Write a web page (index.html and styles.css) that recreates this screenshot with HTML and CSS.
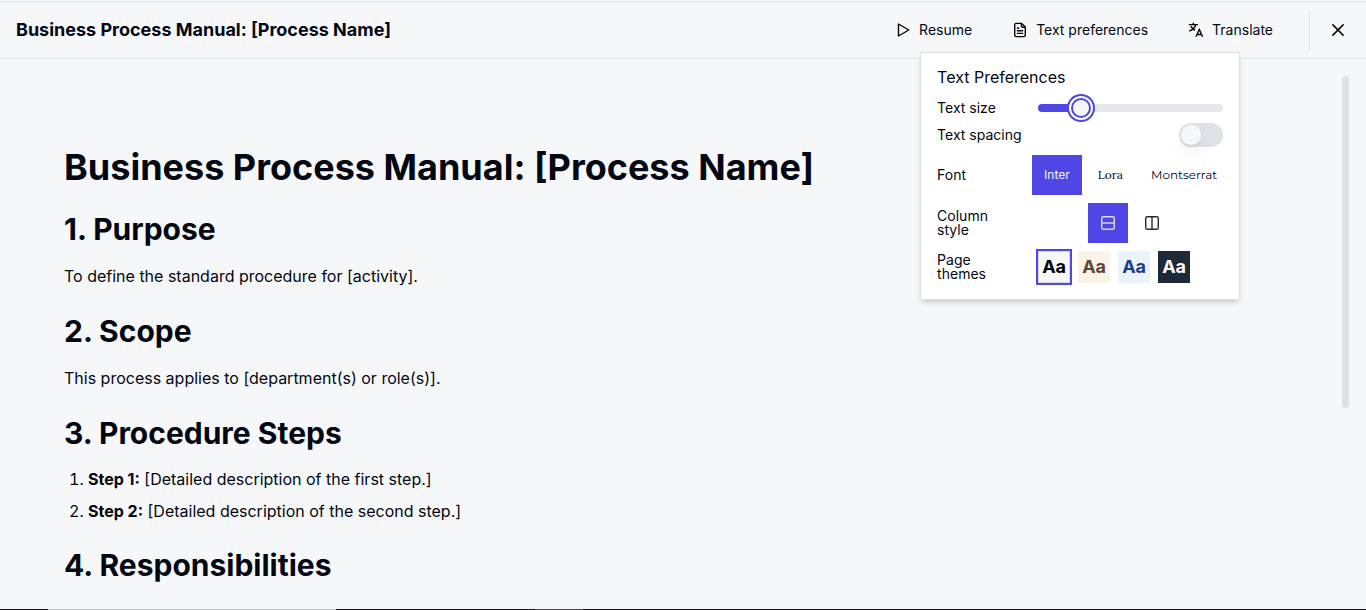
FILE: index.html
```html
<!DOCTYPE html>
<html lang="en">
<head>
<meta charset="utf-8">
<meta name="viewport" content="width=device-width, initial-scale=1">
<title>Business Process Manual</title>
<link rel="stylesheet" href="styles.css">
</head>
<body>
<div class="reader">
  <header class="topbar">
    <div class="topbar-title">Business Process Manual: [Process Name]</div>
    <div class="actions">
      <button class="action" type="button">
        <svg class="icon" viewBox="0 0 16 16" aria-hidden="true"><path d="M3.5 2v12L13.8 8z" fill="none" stroke="currentColor" stroke-width="1.4" stroke-linejoin="round"/></svg>
        Resume
      </button>
      <div class="menu-anchor">
        <button class="action" type="button" aria-expanded="true">
          <svg class="icon" viewBox="0 0 16 16" aria-hidden="true"><g fill="none" stroke="currentColor" stroke-width="1.4" stroke-linejoin="round" stroke-linecap="round"><path d="M9.6 1.4H4.2c-.9 0-1.5.6-1.5 1.5v10.2c0 .9.6 1.5 1.5 1.5h7.6c.9 0 1.5-.6 1.5-1.5V5z"/><path d="M9.4 1.6v2.5c0 .7.4 1.1 1.1 1.1h2.6M5.4 6h1.4M5.4 8.7h5.2M5.4 11.4h5.2"/></g></svg>
          Text preferences
        </button>
        <section class="popover" aria-label="Text Preferences">
          <h2 class="popover-title">Text Preferences</h2>
          <div class="row row-size">
            <label class="row-label" for="size">Text size</label>
            <input class="slider" id="size" type="range" min="0" max="5" value="1">
          </div>
          <div class="row row-spacing">
            <label class="row-label" for="spacing">Text spacing</label>
            <input class="switch" id="spacing" type="checkbox" role="switch">
          </div>
          <div class="row">
            <span class="row-label" id="font-label">Font</span>
            <div class="choices" role="group" aria-labelledby="font-label">
              <button class="choice choice-active" type="button">Inter</button>
              <button class="choice choice-lora" type="button">Lora</button>
              <button class="choice choice-montserrat" type="button">Montserrat</button>
            </div>
          </div>
          <div class="row">
            <span class="row-label row-label-narrow" id="column-label">Column style</span>
            <div class="choices choices-center" role="group" aria-labelledby="column-label">
              <button class="choice choice-square choice-active" type="button" aria-label="Single column">
                <svg class="icon" viewBox="0 0 16 16" aria-hidden="true"><g fill="none" stroke="currentColor" stroke-width="1.4"><rect x="1.7" y="1.7" width="12.6" height="12.6" rx="1.6"/><path d="M2 8h12"/></g></svg>
              </button>
              <button class="choice choice-square" type="button" aria-label="Two columns">
                <svg class="icon" viewBox="0 0 16 16" aria-hidden="true"><g fill="none" stroke="currentColor" stroke-width="1.4"><rect x="1.7" y="1.7" width="12.6" height="12.6" rx="1.6"/><path d="M8 2v12"/></g></svg>
              </button>
            </div>
          </div>
          <div class="row">
            <span class="row-label row-label-narrow" id="theme-label">Page themes</span>
            <div class="themes" role="group" aria-labelledby="theme-label">
              <button class="theme theme-light theme-active" type="button">Aa</button>
              <button class="theme theme-sepia" type="button">Aa</button>
              <button class="theme theme-blue" type="button">Aa</button>
              <button class="theme theme-dark" type="button">Aa</button>
            </div>
          </div>
        </section>
      </div>
      <button class="action" type="button">
        <svg class="icon" viewBox="0 0 16 16" aria-hidden="true"><g fill="none" stroke="currentColor" stroke-width="1.4"><path d="M.8 2.6h9M5.3.8v1.8M2.8 4.2c1 1.8 2.4 3.2 4.2 4.2M7.8 2.8C7 5.6 4.4 7.8 1.4 9"/><path d="M8 14.8l3.3-7.4 3.3 7.4M9 12.5h4.6"/></g></svg>
        Translate
      </button>
      <div class="divider"></div>
      <button class="close" type="button" aria-label="Close">
        <svg class="icon" viewBox="0 0 16 16" aria-hidden="true"><path d="M2.4 2.4l11.2 11.2M13.6 2.4L2.4 13.6" fill="none" stroke="currentColor" stroke-width="1.5"/></svg>
      </button>
    </div>
  </header>
  <main class="page">
    <article class="doc">
      <h1>Business Process Manual: [Process Name]</h1>
      <h2>1. Purpose</h2>
      <p>To define the standard procedure for [activity].</p>
      <h2>2. Scope</h2>
      <p>This process applies to [department(s) or role(s)].</p>
      <h2>3. Procedure Steps</h2>
      <ol>
        <li><strong>Step 1:</strong> [Detailed description of the first step.]</li>
        <li><strong>Step 2:</strong> [Detailed description of the second step.]</li>
      </ol>
      <h2>4. Responsibilities</h2>
    </article>
    <div class="scroll-track"><div class="scroll-thumb"></div></div>
  </main>
  <div class="bottom-edge"></div>
</div>
</body>
</html>
```
FILE: styles.css
```css
:root {
  --ink: #030712;
  --paper: #f6f7f9;
  --line: #dee1e6;
  --accent: #4f46e5;
}
* { box-sizing: border-box; }
body {
  margin: 0;
  background: var(--paper);
  color: var(--ink);
  font: 16px/26px Inter, "Liberation Sans", sans-serif;
}
button {
  margin: 0;
  border: 0;
  padding: 0;
  background: none;
  color: inherit;
  font: inherit;
  cursor: pointer;
}
.reader {
  display: flex;
  flex-direction: column;
  height: 100vh;
  overflow: hidden;
  padding-top: 1px;
}
.topbar {
  display: flex;
  align-items: center;
  justify-content: space-between;
  flex: none;
  padding: 8px 20px 8px 16px;
  border: solid #dfe3e2;
  border-width: 1px 0;
}
.topbar-title { font-size: 18px; font-weight: 700; }
.actions { display: flex; align-items: center; gap: 8px; }
.action {
  display: flex;
  align-items: center;
  gap: 8px;
  height: 40px;
  padding: 0 16px;
  font-size: 14px;
}
.icon { display: block; width: 16px; height: 16px; flex: none; }
.divider { width: 1px; height: 40px; margin: 0 12px; background: var(--line); }
.menu-anchor { position: relative; }
.popover {
  position: absolute;
  z-index: 2;
  top: 42px;
  left: 50%;
  width: 320px;
  margin-left: -160px;
  padding: 12px 16px 16px;
  border: 1px solid var(--line);
  background: #fff;
  box-shadow: 0 4px 6px -1px rgba(0, 0, 0, .12), 0 2px 4px -2px rgba(0, 0, 0, .12);
}
.popover-title { margin: 0; font-size: 16px; line-height: 24px; font-weight: 400; }
.row {
  display: grid;
  grid-template-columns: 95px 1fr;
  align-items: center;
  margin-top: 8px;
}
.row-label { font-size: 14px; line-height: 14px; }
.row-label-narrow { max-width: 60px; }
.row-size { height: 22px; }
.row-spacing { margin-top: 4px; }
.slider {
  appearance: none;
  height: 8px;
  margin: 0 0 0 6px;
  border-radius: 4px;
  background: linear-gradient(to right, var(--accent) 23%, #e5e7eb 23%);
}
.slider::-webkit-slider-thumb {
  appearance: none;
  width: 20px;
  height: 20px;
  border: 2px solid var(--accent);
  border-radius: 50%;
  background: var(--paper);
  box-shadow: 0 0 0 2px #fff, 0 0 0 4px var(--accent);
}
.switch {
  appearance: none;
  justify-self: end;
  width: 44px;
  height: 24px;
  margin: 0;
  padding: 2px;
  border-radius: 12px;
  background: var(--line);
}
.switch::before {
  content: "";
  display: block;
  width: 20px;
  height: 20px;
  border-radius: 50%;
  background: var(--paper);
  box-shadow: 0 10px 15px -3px rgba(0, 0, 0, .1), 0 4px 6px -4px rgba(0, 0, 0, .1);
}
.switch:checked { background: var(--accent); }
.switch:checked::before { margin-left: auto; }
.choices { display: flex; gap: 4px; margin-right: -4px; }
.choices-center { justify-content: center; }
.choice { height: 40px; padding: 0 12px; font-size: 12px; }
.choice-active { background: var(--accent); color: var(--paper); }
.choice-square { display: grid; place-items: center; width: 40px; padding: 0; }
.choice-square .icon { opacity: .85; }
.choice-lora { font-family: Lora, "Liberation Serif", serif; }
.choice-montserrat { font-family: Montserrat, "DejaVu Sans", sans-serif; }
.themes { display: flex; gap: 8px; margin-left: 6px; }
.theme { width: 32px; height: 32px; font-size: 18px; font-weight: 700; }
.theme-light { border: 1px solid #d5d9df; background: var(--paper); color: #000; }
.theme-sepia { background: #fbf3e6; color: #5b4636; }
.theme-blue { background: #eaf3fc; color: #1e3a8a; }
.theme-dark { background: #1f2937; color: #fff; }
.theme-active { box-shadow: 0 0 0 2px var(--accent); }
.page {
  display: flex;
  flex: 1;
  min-height: 0;
  overflow: hidden;
  padding: 0 17px 0 64px;
}
.doc { flex: 1; padding-top: 88px; }
.doc h1, .doc h2 { margin: 0; font-weight: 700; }
.doc h1 { margin-bottom: 24px; font-size: 36px; line-height: 40px; }
.doc h2 { margin-bottom: 16px; font-size: 30px; line-height: 36px; }
.doc p { margin: 0 0 24px; }
.doc ol { margin: 0 0 24px; padding-left: 24px; line-height: 24px; }
.doc li + li { margin-top: 8px; }
.doc strong { font-weight: 700; }
.scroll-track { width: 7px; padding: 17px 0; }
.scroll-thumb { height: 64.4%; border-radius: 4px; background: var(--line); }
.bottom-edge {
  flex: none;
  height: 1px;
  background: linear-gradient(to right, #1b1b1d 48px, #bdbfc1 48px 336px, #1b1b1d 336px 535px, #4b4b4e 535px 583px, #1b1b1d 583px);
}
```
